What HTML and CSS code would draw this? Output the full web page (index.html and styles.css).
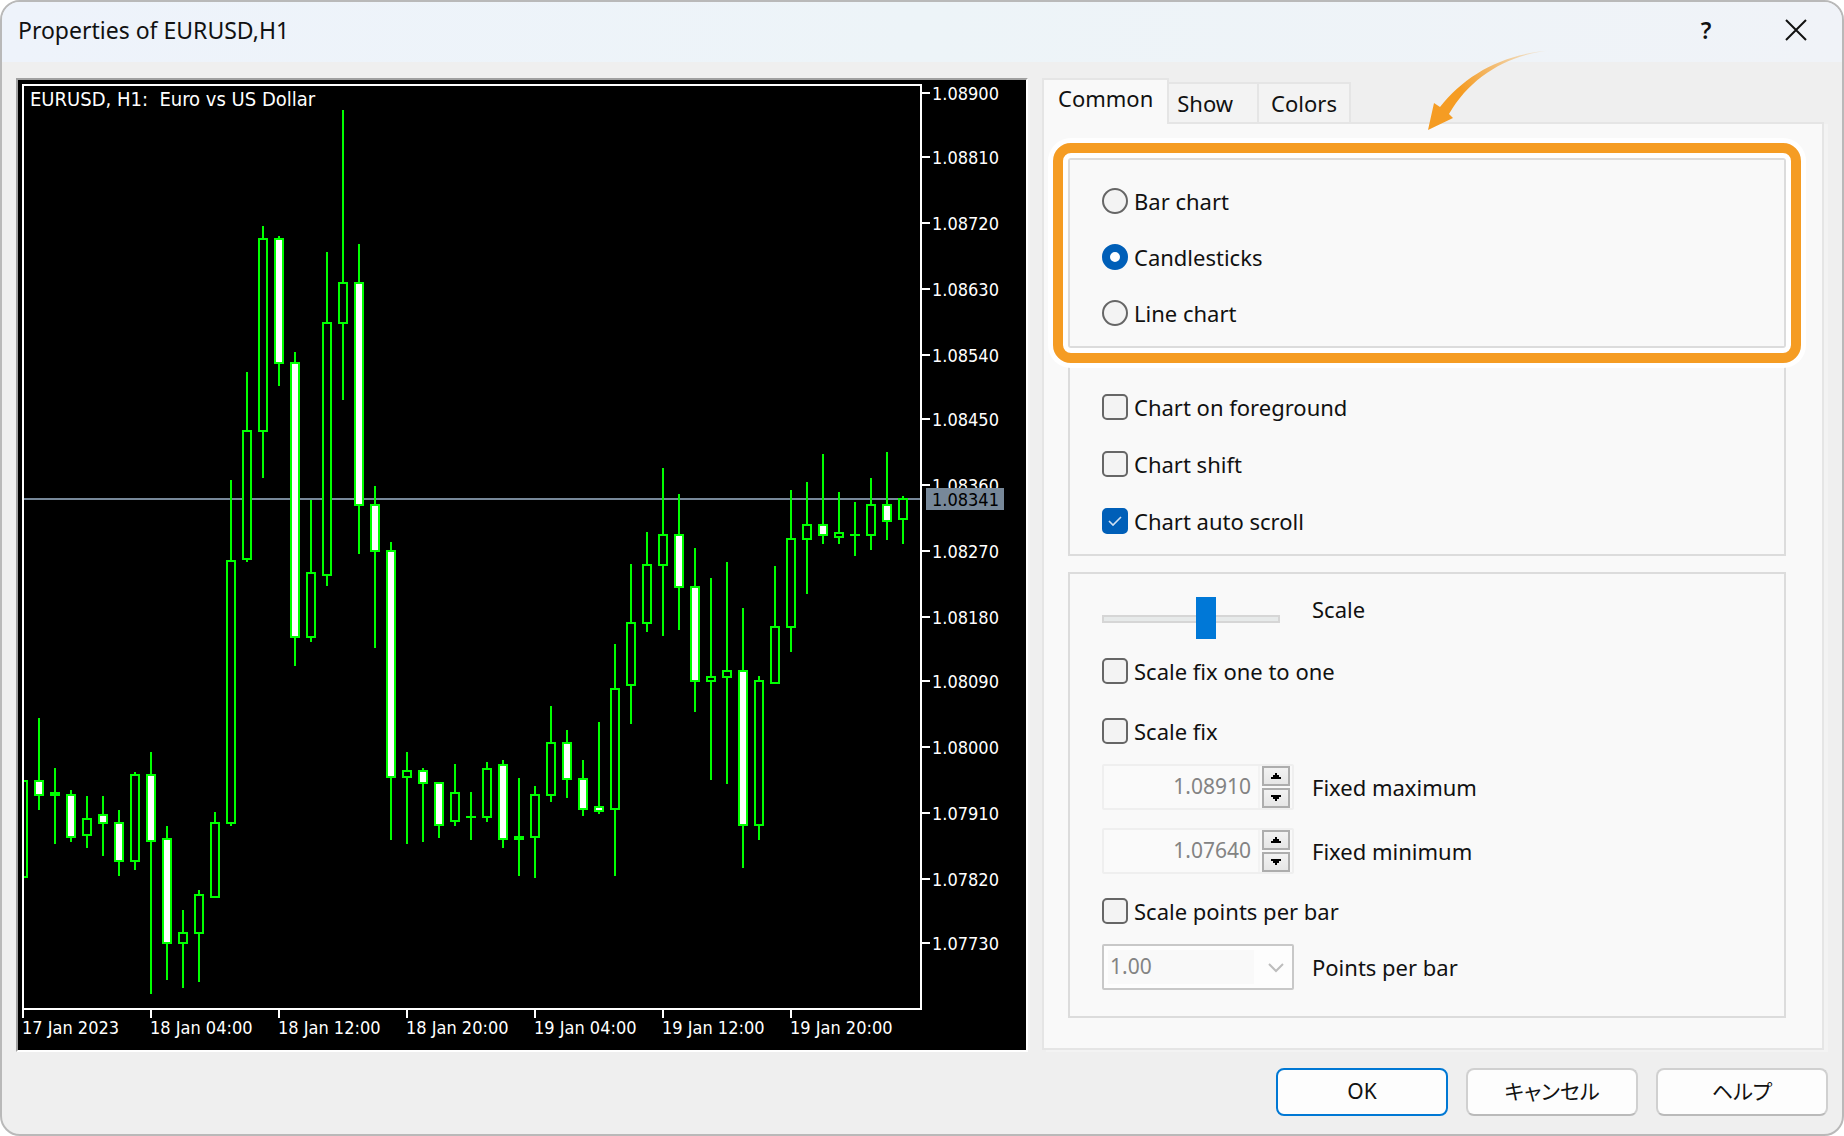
FILE: index.html
```html
<!DOCTYPE html>
<html lang="en">
<head>
<meta charset="utf-8">
<title>Properties of EURUSD,H1</title>
<link rel="stylesheet" href="styles.css">
</head>
<body>
<div class="window">
  <header class="titlebar">
    <h1 class="title">Properties of EURUSD,H1</h1>
    <button class="title-button" type="button" aria-label="Help">?</button>
    <button class="title-button" type="button" aria-label="Close">
      <svg class="close-icon" viewBox="0 0 22 22"><path d="M1 1L21 21M21 1L1 21"/></svg>
    </button>
  </header>

  <main class="content">
    <section class="chart">
      <svg class="chart-svg" viewBox="18 80 1008 970">
        <defs>
          <clipPath id="plot"><rect x="24" y="86" width="896" height="922"/></clipPath>
        </defs>
        <line class="price-line" x1="24" y1="499" x2="920" y2="499"/>
        <g id="candles" clip-path="url(#plot)"></g>
        <path class="frame" d="M23 1018V85H921V1009H23M151 1010v8M279 1010v8M407 1010v8M535 1010v8M663 1010v8M791 1010v8"/>
        <path class="frame" d="M922 93h8M922 157h8M922 223h8M922 289h8M922 355h8M922 419h8M922 485h8M922 551h8M922 617h8M922 681h8M922 747h8M922 813h8M922 879h8M922 943h8"/>
        <text class="symbol" x="30" y="106" xml:space="preserve">EURUSD, H1:  Euro vs US Dollar</text>
        <g class="axis">
          <text x="932" y="100">1.08900</text>
          <text x="932" y="164">1.08810</text>
          <text x="932" y="230">1.08720</text>
          <text x="932" y="296">1.08630</text>
          <text x="932" y="362">1.08540</text>
          <text x="932" y="426">1.08450</text>
          <text x="932" y="492">1.08360</text>
          <text x="932" y="558">1.08270</text>
          <text x="932" y="624">1.08180</text>
          <text x="932" y="688">1.08090</text>
          <text x="932" y="754">1.08000</text>
          <text x="932" y="820">1.07910</text>
          <text x="932" y="886">1.07820</text>
          <text x="932" y="950">1.07730</text>
          <text x="22" y="1034">17 Jan 2023</text>
          <text x="150" y="1034">18 Jan 04:00</text>
          <text x="278" y="1034">18 Jan 12:00</text>
          <text x="406" y="1034">18 Jan 20:00</text>
          <text x="534" y="1034">19 Jan 04:00</text>
          <text x="662" y="1034">19 Jan 12:00</text>
          <text x="790" y="1034">19 Jan 20:00</text>
        </g>
        <rect class="price-tag" x="926" y="488" width="78" height="22"/>
        <text class="price-text" x="932" y="506">1.08341</text>
      </svg>
    </section>

    <section class="settings">
      <nav class="tabs">
        <button class="tab tab-active" type="button">Common</button>
        <button class="tab tab-show" type="button">Show</button>
        <button class="tab" type="button">Colors</button>
      </nav>
      <form class="panel">
        <div class="group group-type">
          <label class="choice"><input class="radio" type="radio" name="type">Bar chart</label>
          <label class="choice"><input class="radio" type="radio" name="type" checked>Candlesticks</label>
          <label class="choice"><input class="radio" type="radio" name="type">Line chart</label>
          <svg class="arrow" viewBox="0 0 130 84">
            <defs>
              <linearGradient id="fade" gradientUnits="userSpaceOnUse" x1="127" y1="2" x2="34" y2="44">
                <stop offset="0" stop-color="#f59c23" stop-opacity="0"/>
                <stop offset="1" stop-color="#f59c23"/>
              </linearGradient>
            </defs>
            <path fill="url(#fade)" d="M0 82L6 55L12 59C38 26 76 5 127 2C84 5 44 26 21 66L25 70Z"/>
          </svg>
        </div>

        <div class="group group-options">
          <label class="choice"><input class="check" type="checkbox">Chart on foreground</label>
          <label class="choice"><input class="check" type="checkbox">Chart shift</label>
          <label class="choice"><input class="check" type="checkbox" checked>Chart auto scroll</label>
        </div>

        <div class="group group-scale">
          <input class="slider" id="scale" type="range" min="0" max="100" value="60">
          <label class="scale-label" for="scale">Scale</label>
          <label class="choice wide"><input class="check" type="checkbox">Scale fix one to one</label>
          <label class="choice wide"><input class="check" type="checkbox">Scale fix</label>
          <div class="spinner">
            <input class="number" id="fixmax" type="text" value="1.08910" disabled>
            <div class="steps">
              <button class="step" type="button" aria-label="Increase maximum"><svg class="step-icon" viewBox="0 0 10 6"><path d="M4 0h2v2h2v2h2v2H0V4h2V2h2z"/></svg></button>
              <button class="step" type="button" aria-label="Decrease maximum"><svg class="step-icon" viewBox="0 0 10 6"><path d="M0 0h10v2H8v2H6v2H4V4H2V2H0z"/></svg></button>
            </div>
          </div>
          <label for="fixmax">Fixed maximum</label>
          <div class="spinner">
            <input class="number" id="fixmin" type="text" value="1.07640" disabled>
            <div class="steps">
              <button class="step" type="button" aria-label="Increase minimum"><svg class="step-icon" viewBox="0 0 10 6"><path d="M4 0h2v2h2v2h2v2H0V4h2V2h2z"/></svg></button>
              <button class="step" type="button" aria-label="Decrease minimum"><svg class="step-icon" viewBox="0 0 10 6"><path d="M0 0h10v2H8v2H6v2H4V4H2V2H0z"/></svg></button>
            </div>
          </div>
          <label for="fixmin">Fixed minimum</label>
          <label class="choice wide"><input class="check" type="checkbox">Scale points per bar</label>
          <div class="combo">
            <select class="select" id="points" disabled><option>1.00</option></select>
            <svg class="chevron" viewBox="0 0 16 10"><path d="M1 1L8 8L15 1"/></svg>
          </div>
          <label for="points">Points per bar</label>
        </div>
      </form>
    </section>
  </main>

  <footer class="footer">
    <button class="button button-default" type="button">OK</button>
    <button class="button" type="button" lang="ja">キャンセル</button>
    <button class="button" type="button" lang="ja">ヘルプ</button>
  </footer>
</div>
<script src="chart.js"></script>
</body>
</html>
```
FILE: styles.css
```css
* {
  box-sizing: border-box;
}

body {
  margin: 0;
  background: #fff;
  color: #111;
  font: 22px/26px "Noto Sans", "Noto Sans CJK JP", sans-serif;
}

button,
input,
select {
  margin: 0;
  padding: 0;
  color: inherit;
  font: inherit;
}

.window {
  display: flex;
  flex-direction: column;
  min-height: 100vh;
  overflow: hidden;
  border: 2px solid #b9b9b9;
  border-radius: 20px;
  background: #efefef;
}

/* Title bar */
.titlebar {
  display: flex;
  align-items: center;
  height: 60px;
  padding: 0 1px 4px 16px;
  background: linear-gradient(90deg, #eef3fb, #edf4f8 50%, #f0f3f8);
}

.title {
  flex: 1;
  margin: 0;
  font-size: 23px;
  font-weight: 400;
}

.title-button {
  display: grid;
  place-items: center;
  width: 90px;
  height: 56px;
  border: 0;
  background: none;
  font-size: 23px;
  font-weight: 600;
}

.close-icon {
  width: 22px;
  height: 22px;
  fill: none;
  stroke: #111;
  stroke-width: 2;
}

/* Chart preview */
.content {
  display: flex;
  align-items: flex-start;
  gap: 14px;
  padding: 16px 18px 0 14px;
}

.chart {
  flex: 1008 1 0;
  border: 2px solid #fff;
  border-top-color: #a0a0a0;
  border-left-color: #a0a0a0;
  background: #000;
}

.chart-svg {
  display: block;
  width: 100%;
  height: auto;
}

.frame {
  fill: none;
  stroke: #fff;
  stroke-width: 2;
}

.price-line {
  stroke: #778899;
  stroke-width: 2;
}

.symbol,
.axis,
.price-text {
  fill: #fff;
  font: 18px "DejaVu Sans Condensed", "DejaVu Sans", sans-serif;
}

.symbol {
  font-size: 20px;
}

.price-tag {
  fill: #778899;
}

.price-text {
  fill: #000;
}

.candle {
  fill: #000;
  stroke: #0f0;
  stroke-width: 2;
}

.candle-down {
  fill: #fff;
}

/* Tabs */
.settings {
  flex: 782 1 0;
}

.tabs {
  display: flex;
  align-items: flex-end;
}

.tab {
  height: 40px;
  padding: 0 12px;
  border: 2px solid #e5e5e5;
  border-bottom: 0;
  border-left: 0;
  background: #f3f3f3;
}

.tab-show {
  padding: 0 24px 0 8px;
}

.tab-active {
  z-index: 1;
  height: 46px;
  margin-bottom: -2px;
  padding: 0 14px 8px;
  border-left: 2px solid #e5e5e5;
  background: #f9f9f9;
}

.panel {
  display: flex;
  flex-direction: column;
  gap: 16px;
  padding: 34px 36px 30px 24px;
  border: 2px solid #e5e5e5;
  background: #f9f9f9;
  box-shadow: 4px 2px 0 #f3f3f3;
}

.group {
  border: 2px solid #dcdcdc;
}

.group-type,
.group-options {
  display: flex;
  flex-direction: column;
  padding: 28px 32px 20px;
}

.group-type {
  position: relative;
  gap: 30px;
}

.group-type::after {
  content: "";
  position: absolute;
  inset: -17px;
  border: 10px solid #f59c23;
  border-radius: 18px;
  box-shadow: 0 0 0 5px #fff, inset 0 0 0 5px #fff;
  pointer-events: none;
}

.group-options {
  gap: 31px;
}

.arrow {
  position: absolute;
  top: -112px;
  left: 358px;
  width: 130px;
  height: 84px;
}

.group-scale {
  display: grid;
  grid-template-columns: 192px 1fr;
  grid-template-rows: 32px 72px 48px 64px 64px 56px 56px;
  align-items: center;
  column-gap: 18px;
  padding: 29px 32px 21px;
}

.wide {
  grid-column: 1 / -1;
}

.scale-label {
  padding-bottom: 20px;
}

/* Controls */
.choice {
  display: flex;
  align-items: center;
  gap: 6px;
}

.radio,
.check {
  flex: none;
  width: 26px;
  height: 26px;
  border: 2px solid #666;
  background: #f3f3f3;
  appearance: none;
}

.radio {
  border-radius: 50%;
}

.radio:checked {
  border: 8px solid #005fb8;
  background: #fff;
}

.check {
  border-radius: 5px;
}

.check:checked {
  border-color: #005fb8;
  background: #005fb8 url('data:image/svg+xml,<svg xmlns="http://www.w3.org/2000/svg" viewBox="0 0 22 22"><path d="M5 11l4 4l8-8" fill="none" stroke="%23cfe0f2" stroke-width="1.6"/></svg>');
}

.slider {
  width: 178px;
  height: 42px;
  background: none;
  appearance: none;
}

.slider::-webkit-slider-runnable-track {
  height: 8px;
  border: 2px solid #d6d6d6;
  background: #e7eaea;
}

.slider::-webkit-slider-thumb {
  width: 20px;
  height: 42px;
  margin-top: -20px;
  background: #0078d7;
  appearance: none;
}

.spinner {
  display: flex;
  height: 46px;
  border: 2px solid #efefef;
  border-radius: 2px;
}

.number {
  flex: 1;
  min-width: 0;
  padding: 0 7px 2px 0;
  border: 0;
  background: #fafafa;
  color: #838383;
  font-size: 21px;
  text-align: right;
}

.steps {
  display: flex;
  flex-direction: column;
  gap: 2px;
  width: 34px;
  padding: 0 2px;
  border-left: 2px solid #f3f3f3;
}

.step {
  flex: 1;
  display: grid;
  place-items: center;
  border: 2px solid #adadad;
  background: linear-gradient(#f2f2f2, #e6e6e6);
}

.step-icon {
  width: 10px;
  height: 6px;
}

.combo {
  position: relative;
}

.select {
  display: block;
  width: 100%;
  height: 46px;
  padding: 0 6px 2px;
  border: 2px solid #c8c8c8;
  border-radius: 2px;
  background: linear-gradient(#f9f9f9, #f9f9f9) 4px 4px / 146px 34px no-repeat #fdfdfd;
  color: #838383;
  font-size: 21px;
  opacity: 1;
  appearance: none;
}

.chevron {
  position: absolute;
  top: 19px;
  right: 10px;
  width: 16px;
  height: 10px;
  fill: none;
  stroke: #bdbdbd;
  stroke-width: 2;
}

/* Footer */
.footer {
  display: flex;
  justify-content: flex-end;
  gap: 18px;
  padding: 16px 14px 18px;
}

.button {
  width: 172px;
  height: 48px;
  padding-bottom: 2px;
  border: 2px solid #d0d0d0;
  border-bottom-color: #bababa;
  border-radius: 8px;
  background: #fdfdfd;
  font-size: 21px;
  font-feature-settings: "palt";
}

.button-default {
  border-color: #0078d4;
}
```
FILE: chart.js
```js
// One row per hour: wick top, body top, body bottom, wick bottom, 1 = falling bar
const bars = [
  [780, 780, 878, 878, 0], [718, 780, 796, 810, 1], [768, 792, 796, 844, 0], [790, 794, 838, 842, 1],
  [796, 818, 836, 848, 0], [796, 814, 824, 856, 1], [810, 822, 862, 876, 1], [772, 774, 862, 870, 0],
  [752, 774, 842, 994, 1], [826, 838, 944, 980, 1], [910, 932, 944, 988, 0], [890, 894, 934, 982, 0],
  [812, 822, 898, 898, 0], [480, 560, 824, 826, 0], [372, 430, 560, 562, 0], [226, 238, 432, 478, 0],
  [236, 238, 364, 386, 1], [352, 362, 638, 666, 1], [500, 572, 638, 642, 0], [252, 322, 576, 586, 0],
  [110, 282, 324, 400, 0], [244, 282, 506, 554, 1], [486, 504, 552, 648, 1], [542, 550, 778, 840, 1],
  [752, 770, 778, 844, 0], [768, 770, 784, 842, 1], [782, 782, 826, 838, 1], [764, 792, 822, 826, 0],
  [792, 816, 818, 840, 0], [762, 768, 818, 822, 0], [760, 764, 840, 848, 1], [778, 836, 840, 876, 0],
  [786, 794, 838, 878, 0], [706, 742, 796, 802, 0], [730, 742, 780, 798, 1], [760, 778, 810, 816, 1],
  [722, 806, 812, 814, 1], [644, 688, 810, 876, 0], [564, 622, 686, 724, 0], [532, 564, 624, 632, 0],
  [468, 534, 566, 636, 0], [494, 534, 588, 630, 1], [548, 586, 682, 712, 1], [578, 676, 682, 780, 0],
  [562, 670, 678, 784, 0], [608, 670, 826, 868, 1], [676, 680, 826, 840, 0], [566, 626, 684, 684, 0],
  [490, 538, 628, 652, 0], [482, 524, 540, 594, 0], [454, 524, 536, 544, 1], [492, 532, 538, 544, 0],
  [502, 534, 536, 556, 0], [478, 504, 536, 550, 0], [452, 504, 522, 540, 1], [496, 498, 520, 544, 0]
];

const layer = document.getElementById("candles");

bars.forEach(([high, top, bottom, low, falling], i) => {
  const x = 23 + 16 * i;
  const path = document.createElementNS("http://www.w3.org/2000/svg", "path");
  const body = `M${x - 4} ${top + 1}h8V${bottom - 1}h-8z`;
  const flat = `M${x - 5} ${top + 1}h10`;
  path.setAttribute("class", falling ? "candle candle-down" : "candle");
  path.setAttribute("d", `M${x} ${high}V${top}M${x} ${bottom}V${low}` + (bottom - top > 2 ? body : flat));
  layer.append(path);
});
```
